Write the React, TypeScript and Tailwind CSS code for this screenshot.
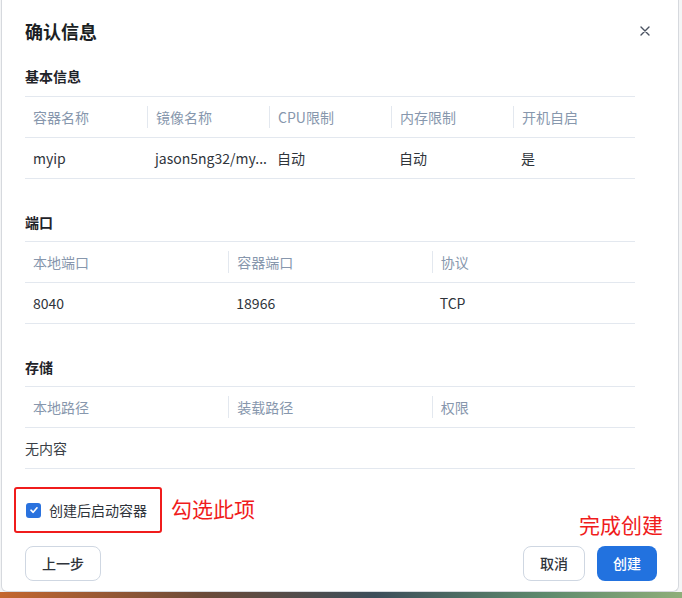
import React from "react";

const FONT = { fontFamily: '"Noto Sans CJK SC", "Noto Sans", sans-serif' };

type Col = { label: string };

function InfoTable({ cols, rows, empty }: { cols: Col[]; rows: string[][]; empty?: string }) {
  const grid = cols.length === 5 ? "grid-cols-5" : "grid-cols-3";
  return (
    <div className="border-t border-[#e3e8ef]">
      <div className={`grid ${grid} h-[41px] items-center border-b border-[#e3e8ef]`}>
        {cols.map((c, i) => (
          <div
            key={c.label}
            className={`flex h-[22px] items-center px-2 text-[14px] text-[#8797ad] ${
              i > 0 ? "border-l border-[#e3e8ef]" : ""
            }`}
          >
            {c.label}
          </div>
        ))}
      </div>
      {empty ? (
        <div className="flex h-[41px] items-center border-b border-[#e3e8ef] text-[14px] text-[#3a3f47]">
          {empty}
        </div>
      ) : (
        rows.map((r, ri) => (
          <div key={ri} className={`grid ${grid} h-[41px] items-center border-b border-[#e3e8ef]`}>
            {r.map((v, i) => (
              <div key={i} className="overflow-hidden whitespace-nowrap px-2 text-[14px] text-[#2f343b]">
                {v}
              </div>
            ))}
          </div>
        ))
      )}
    </div>
  );
}

function Section({ title, children, first }: { title: string; children: React.ReactNode; first?: boolean }) {
  return (
    <div className={first ? "mt-[23px]" : "mt-[33px]"}>
      <h3 className={`${first ? "mb-[10px]" : "mb-[9px]"} h-5 text-[14px] font-bold leading-5 text-[#1f2329]`}>
        {title}
      </h3>
      {children}
    </div>
  );
}

export default function App() {
  return (
    <div
      className="relative h-[598px] w-[682px] overflow-hidden bg-[linear-gradient(90deg,#c4672f_0%,#6b4b3a_30%,#3d4e5a_55%,#5e8a6d_80%,#8fae7a_100%)]"
      style={FONT}
    >
      <div className="absolute inset-x-0 top-0 h-[592px] bg-[#f4f5f6]" />
      <div className="relative ml-px h-[592px] w-[678px] rounded-b-[6px] border-x border-b border-[#d6d9de] bg-white px-[23px]">
        <div className="flex items-center justify-between pt-[19px]">
          <h2 className="text-[18px] font-bold leading-6 text-[#1b1f24]">确认信息</h2>
          <svg width="10" height="10" viewBox="0 0 10 10" className="mr-[5px] text-[#4a5261]">
            <path d="M1 1L9 9M9 1L1 9" stroke="currentColor" strokeWidth="1.4" strokeLinecap="round" />
          </svg>
        </div>

        <div className="w-[610px]">
          <Section title="基本信息" first>
            <InfoTable
              cols={[
                { label: "容器名称" },
                { label: "镜像名称" },
                { label: "CPU限制" },
                { label: "内存限制" },
                { label: "开机自启" },
              ]}
              rows={[["myip", "jason5ng32/my...", "自动", "自动", "是"]]}
            />
          </Section>

          <Section title="端口">
            <InfoTable
              cols={[{ label: "本地端口" }, { label: "容器端口" }, { label: "协议" }]}
              rows={[["8040", "18966", "TCP"]]}
            />
          </Section>

          <Section title="存储">
            <InfoTable
              cols={[{ label: "本地路径" }, { label: "装载路径" }, { label: "权限" }]}
              rows={[]}
              empty="无内容"
            />
          </Section>
        </div>

        <div className="relative mt-[18px] flex items-center">
          <div className="-ml-[11px] flex h-[46px] w-[148px] items-center gap-[8px] rounded-[3px] border-2 border-[#f01c1c] pl-[10px]">
            <span className="flex h-[15px] w-[15px] items-center justify-center rounded-[3px] bg-[#2a72de]">
              <svg width="10" height="10" viewBox="0 0 10 10">
                <path d="M2 5.2L4.2 7.3L8 2.8" fill="none" stroke="#fff" strokeWidth="1.6" strokeLinecap="round" strokeLinejoin="round" />
              </svg>
            </span>
            <span className="text-[14px] text-[#2f343b]">创建后启动容器</span>
          </div>
          <span className="ml-[9px] -mt-[4px] text-[21px] leading-none text-[#f01c1c]">勾选此项</span>
          <span className="absolute right-[-8px] top-[27px] text-[21px] leading-none text-[#f01c1c]">完成创建</span>
        </div>

        <div className="mt-[13px] flex items-center justify-between">
          <button className="h-[35px] w-[76px] rounded-[8px] border border-[#cfd7e2] bg-white text-[14px] font-medium text-[#2f343b]">
            上一步
          </button>
          <div className="mr-[-2px] flex gap-[12px]">
            <button className="h-[35px] w-[62px] rounded-[8px] border border-[#cfd7e2] bg-white text-[14px] font-medium text-[#2f343b]">
              取消
            </button>
            <button className="h-[35px] w-[60px] rounded-[8px] bg-[#2272df] text-[14px] font-medium text-white">
              创建
            </button>
          </div>
        </div>
      </div>
    </div>
  );
}
